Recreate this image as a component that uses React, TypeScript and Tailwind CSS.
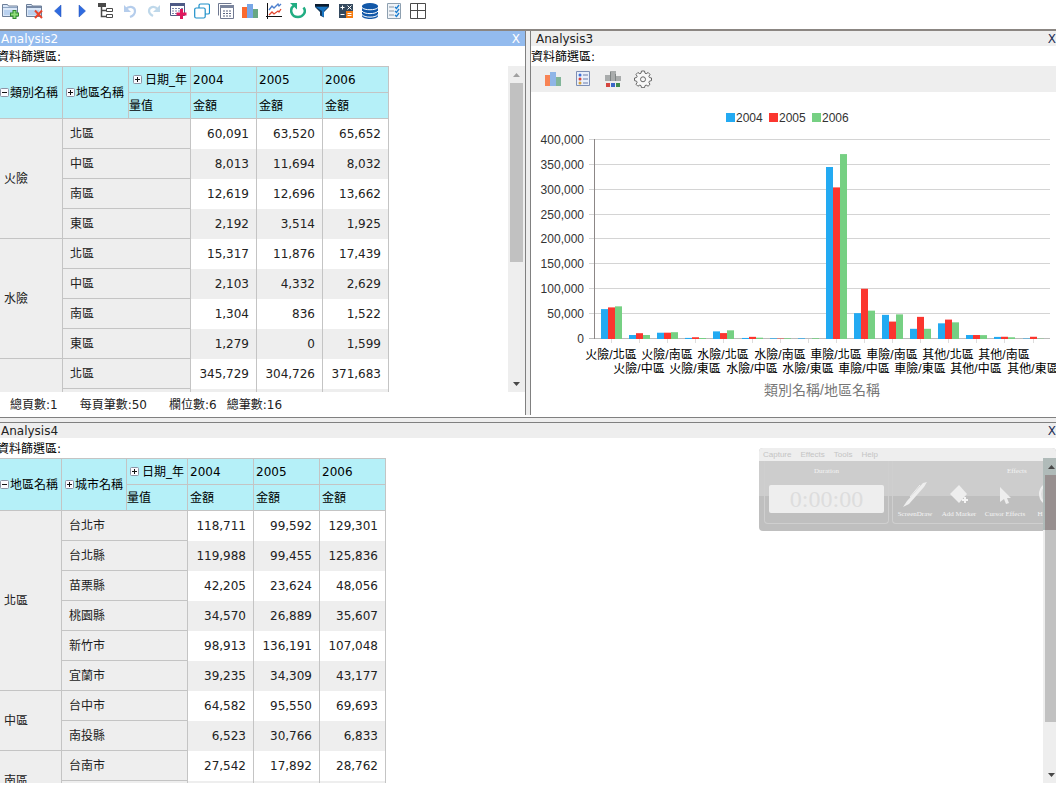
import React from 'react';

type Row = { name: string; values: string[] };
type Group = { name: string; rows: Row[] };

const YEARS = ['2004', '2005', '2006'];

const insuranceGroups: Group[] = [
  {
    name: '火險',
    rows: [
      { name: '北區', values: ['60,091', '63,520', '65,652'] },
      { name: '中區', values: ['8,013', '11,694', '8,032'] },
      { name: '南區', values: ['12,619', '12,696', '13,662'] },
      { name: '東區', values: ['2,192', '3,514', '1,925'] },
    ],
  },
  {
    name: '水險',
    rows: [
      { name: '北區', values: ['15,317', '11,876', '17,439'] },
      { name: '中區', values: ['2,103', '4,332', '2,629'] },
      { name: '南區', values: ['1,304', '836', '1,522'] },
      { name: '東區', values: ['1,279', '0', '1,599'] },
    ],
  },
  {
    name: '',
    rows: [
      { name: '北區', values: ['345,729', '304,726', '371,683'] },
      { name: '', values: ['', '', ''] },
    ],
  },
];

const cityGroups: Group[] = [
  {
    name: '北區',
    rows: [
      { name: '台北市', values: ['118,711', '99,592', '129,301'] },
      { name: '台北縣', values: ['119,988', '99,455', '125,836'] },
      { name: '苗栗縣', values: ['42,205', '23,624', '48,056'] },
      { name: '桃園縣', values: ['34,570', '26,889', '35,607'] },
      { name: '新竹市', values: ['98,913', '136,191', '107,048'] },
      { name: '宜蘭市', values: ['39,235', '34,309', '43,177'] },
    ],
  },
  {
    name: '中區',
    rows: [
      { name: '台中市', values: ['64,582', '95,550', '69,693'] },
      { name: '南投縣', values: ['6,523', '30,766', '6,833'] },
    ],
  },
  {
    name: '南區',
    rows: [
      { name: '台南市', values: ['27,542', '17,892', '28,762'] },
      { name: '', values: ['', '', ''] },
    ],
  },
];

const series = [
  { name: '2004', color: '#23aaf2' },
  { name: '2005', color: '#fb362f' },
  { name: '2006', color: '#76d083' },
];

const chartData: { label: string; values: number[] }[] = [
  { label: '火險/北區', values: [60091, 63520, 65652] },
  { label: '火險/中區', values: [8013, 11694, 8032] },
  { label: '火險/南區', values: [12619, 12696, 13662] },
  { label: '火險/東區', values: [2192, 3514, 1925] },
  { label: '水險/北區', values: [15317, 11876, 17439] },
  { label: '水險/中區', values: [2103, 4332, 2629] },
  { label: '水險/南區', values: [1304, 836, 1522] },
  { label: '水險/東區', values: [1279, 0, 1599] },
  { label: '車險/北區', values: [345729, 304726, 371683] },
  { label: '車險/中區', values: [52000, 101000, 57000] },
  { label: '車險/南區', values: [48500, 35000, 49500] },
  { label: '車險/東區', values: [20500, 44500, 20500] },
  { label: '其他/北區', values: [31500, 39000, 33500] },
  { label: '其他/中區', values: [8000, 8000, 7800] },
  { label: '其他/南區', values: [4200, 4500, 3500] },
  { label: '其他/東區', values: [900, 4500, 600] },
];

const BarsIcon = () => (
  <svg width="16" height="16" viewBox="0 0 16 16">
    <path d="M0 4h5v11H0z" fill="#fb6a2f" />
    <path d="M5 1h6v14H5z" fill="#78a7e6" />
    <path d="M11 6h5v9h-5z" fill="#68a884" />
  </svg>
);

const tools: { title: string; icon: React.ReactNode }[] = [
  {
    title: '新增',
    icon: (
      <svg width="18" height="16" viewBox="0 0 18 16">
        <path d="M1.5 13.500v-12h5l1 1.500h9v10.500z" fill="#dbe8f8" stroke="#6d7f99" />
        <path d="M2 4.500h14" stroke="#8fa6c4" />
        <path d="M3 7h11v5H3z" fill="#b9d1ef" />
        <path d="M13.500 7v9M9 11.500h9" stroke="#2e8a2e" strokeWidth="4" />
        <path d="M13.500 8v7M10 11.500h7" stroke="#8fdd7b" strokeWidth="2" />
      </svg>
    ),
  },
  {
    title: '刪除',
    icon: (
      <svg width="18" height="16" viewBox="0 0 18 16">
        <path d="M1.5 13.500v-12h5l1 1.500h9v10.500z" fill="#dbe8f8" stroke="#6d7f99" />
        <path d="M2 3h14v2H2z" fill="#7688a4" />
        <path d="M3 7h11v5H3z" fill="#b9d1ef" />
        <path d="M10 7.500l7 7.500M17 7.500L10 15" stroke="#e8452c" strokeWidth="2" />
      </svg>
    ),
  },
  {
    title: '上一頁',
    icon: (
      <svg width="16" height="16" viewBox="0 0 16 16">
        <path d="M11 2v12L4.500 8z" fill="#2f6be0" stroke="#1c4fb4" strokeWidth=".5" />
      </svg>
    ),
  },
  {
    title: '下一頁',
    icon: (
      <svg width="16" height="16" viewBox="0 0 16 16">
        <path d="M5 2v12l6.500-6z" fill="#2f6be0" stroke="#1c4fb4" strokeWidth=".5" />
      </svg>
    ),
  },
  {
    title: '樹狀',
    icon: (
      <svg width="16" height="16" viewBox="0 0 16 16">
        <path d="M0 0h8v4H0z" fill="#4a4a4a" />
        <path d="M3.500 4v9.500H9M3.500 7.500H9" fill="none" stroke="#4a4a4a" strokeWidth="1.500" />
        <path d="M8.500 5.500h6v3h-6zM8.500 11.500h6v3h-6z" fill="#fff" stroke="#4a4a4a" />
      </svg>
    ),
  },
  {
    title: '復原',
    icon: (
      <svg width="16" height="16" viewBox="0 0 16 16">
        <path d="M3 6.500C8 2 13 4 13 8c0 3-2 5-5 6" fill="none" stroke="#b5cdec" strokeWidth="2.200" />
        <path d="M2 2v7h7z" fill="#b5cdec" />
      </svg>
    ),
  },
  {
    title: '重做',
    icon: (
      <svg width="16" height="16" viewBox="0 0 16 16">
        <path d="M12 6.500C8 2 3 4 3 8c0 3 2 4 4 5" fill="none" stroke="#bfd8ea" strokeWidth="2.200" />
        <path d="M14 2v7H7z" fill="#bfd8ea" />
      </svg>
    ),
  },
  {
    title: '加入表格',
    icon: (
      <svg width="18" height="18" viewBox="0 0 18 18">
        <path d="M1.500 1.500h14v12h-14z" fill="#fff" stroke="#4e5a85" />
        <path d="M1 1h15v3H1z" fill="#4e5a85" />
        <path d="M3 6.500h11M3 9h11M3 11.500h7" stroke="#7a84aa" strokeDasharray="2 1" />
        <path d="M12.500 7v10M7.500 12h10" stroke="#e0185c" strokeWidth="3" />
      </svg>
    ),
  },
  {
    title: '複製',
    icon: (
      <svg width="16" height="16" viewBox="0 0 16 16">
        <rect x="5" y="1" width="10.500" height="10" rx="1.500" fill="#fff" stroke="#1c8fc9" strokeWidth="1.200" />
        <rect x=".7" y="5" width="10.500" height="10" rx="1.500" fill="#fff" stroke="#1c8fc9" strokeWidth="1.200" />
      </svg>
    ),
  },
  {
    title: '複製表格',
    icon: (
      <svg width="18" height="16" viewBox="0 0 18 16">
        <path d="M1.500 12.500v-12h13" fill="none" stroke="#6f7890" />
        <path d="M3.500 2.500h13v13h-13z" fill="#fff" stroke="#6f7890" />
        <path d="M3 2h14v3H3z" fill="#7b859d" />
        <path d="M6 8h9M6 10.500h9M6 13h9" stroke="#5a6480" strokeDasharray="2 1" />
      </svg>
    ),
  },
  { title: '圖表', icon: <BarsIcon /> },
  {
    title: '折線圖',
    icon: (
      <svg width="16" height="16" viewBox="0 0 16 16">
        <path d="M1.500 0v16M0 13.500h16" stroke="#111" />
        <path d="M3 7l3-4 2 2 4-4 1 2 2-2" fill="none" stroke="#4c7fce" strokeWidth="1.300" />
        <path d="M3 12l3-3 2 2 4-3 1 1 2-3" fill="none" stroke="#e3472f" strokeWidth="1.300" />
      </svg>
    ),
  },
  {
    title: '重新整理',
    icon: (
      <svg width="16" height="16" viewBox="0 0 16 16">
        <path d="M13.500 4.500C17 9 13 14 8 14 1 14-1 6 4 2.500" fill="none" stroke="#21ad82" strokeWidth="2.500" />
        <path d="M0 0h7v6.500z" fill="#21ad82" />
      </svg>
    ),
  },
  {
    title: '篩選',
    icon: (
      <svg width="16" height="16" viewBox="0 0 16 16">
        <path d="M1 1h14v3L10 9v5.500l-4-2V9L1 4z" fill="#12395e" />
        <path d="M1 1h14v2H1z" fill="#0a1c30" />
        <path d="M2 4h12l-4 4v6l-2-1V8z" fill="#1976c4" />
      </svg>
    ),
  },
  {
    title: '計算',
    icon: (
      <svg width="16" height="16" viewBox="0 0 16 16">
        <path d="M1 1h14v14H1z" fill="#34495e" />
        <path d="M8 8h7v7H8z" fill="#f57c10" />
        <path d="M2.500 4.500h4M4.500 2.500v4M9.500 2.500l4 4M13.500 2.500l-4 4M2.500 11.500h4M9.500 10.500h4M9.500 12.500h4" stroke="#fff" />
      </svg>
    ),
  },
  {
    title: '資料庫',
    icon: (
      <svg width="16" height="16" viewBox="0 0 16 16">
        <path d="M0 3v10c0 4 16 4 16 0V3z" fill="#1258a8" />
        <ellipse cx="8" cy="3" rx="8" ry="3" fill="#1258a8" />
        <path d="M0 4.500c2 3 14 3 16 0M0 8c2 3.500 14 3.500 16 0M0 11.500c2 3.500 14 3.500 16 0" fill="none" stroke="#fff" />
      </svg>
    ),
  },
  {
    title: '清單',
    icon: (
      <svg width="16" height="16" viewBox="0 0 16 16">
        <path d="M1.500.5h13v15h-13z" fill="#f0f4f8" stroke="#8ea0b0" />
        <path d="M3 4h5M3 8h5M3 12h5" stroke="#8796a6" />
        <path d="M9 4l1.500 1.500L13 2M9 8l1.500 1.500L13 6M9 12l1.500 1.500L13 10" fill="none" stroke="#1f7fd0" strokeWidth="1.400" />
      </svg>
    ),
  },
  {
    title: '版面',
    icon: (
      <svg width="16" height="16" viewBox="0 0 16 16">
        <path d="M.5.5h15v15H.5zM7.500 1v14M1 7.500h14" fill="none" stroke="#4a4a4a" />
      </svg>
    ),
  },
];

const chartTools: { title: string; icon: React.ReactNode }[] = [
  {
    title: '圖表類型',
    icon: (
      <span className="opacity-80">
        <BarsIcon />
      </span>
    ),
  },
  {
    title: '圖例',
    icon: (
      <svg width="16" height="16" viewBox="0 0 16 16">
        <path d="M1.500.5h13v14h-13z" fill="#e9effa" stroke="#7d8fb5" />
        <path d="M8 4h5M8 8h5M8 12h5" stroke="#6b7dab" />
        <circle cx="5" cy="4" r="1.500" fill="#3f6fd8" />
        <circle cx="5" cy="8" r="1.500" fill="#d8403a" />
        <circle cx="5" cy="12" r="1.500" fill="#d8a23a" />
      </svg>
    ),
  },
  {
    title: '圖表標籤',
    icon: (
      <svg width="16" height="18" viewBox="0 0 16 18">
        <path d="M0 5h5v6H0zM5 1h6v10H5zM11 6h5v5h-5z" fill="#a9acac" />
        <path d="M5.500 2v9M10.500 4v7" stroke="#7f8484" />
        <path d="M1 13h4v4H1z" fill="#d5453f" />
        <path d="M6 13h4v4H6z" fill="#3b66c7" />
        <path d="M11 13h4v4h-4z" fill="#3f8a4d" />
      </svg>
    ),
  },
  {
    title: '設定',
    icon: (
      <svg width="18" height="18" viewBox="0 0 18 18" fill="#f7f7f7" stroke="#666">
        <path d="M7.500 1h3l.5 2.200 1.200.5 2-1.200 1.800 1.900-1.100 1.900.5 1.200 2.100.5v2.600l-2.100.6-.5 1.200 1.100 1.900-1.900 1.900-1.900-1.100-1.200.5-.5 2.100H7.500L7 15.600l-1.200-.5-1.900 1.100L2 14.300l1.100-1.900-.5-1.200-2.100-.6V8l2.100-.5.500-1.200L2 4.400l1.900-1.900 1.900 1.200L7 3.200z" />
        <circle cx="9" cy="9.300" r="2.500" />
      </svg>
    ),
  },
];

const Toggle = ({ open }: { open?: boolean }) => (
  <button aria-label={open ? '收合' : '展開'} className="shrink-0">
    <svg width="9" height="9" viewBox="0 0 9 9" className="block">
      <rect x=".5" y=".5" width="8" height="8" rx="1" fill="#fbfbff" stroke="#8d93a5" />
      <path d={open ? 'M2 4.500h5' : 'M2 4.500h5M4.500 2v5'} stroke="#111" />
    </svg>
  </button>
);

const TitleBar = ({ title, active, inset }: { title: string; active?: boolean; inset?: boolean }) => (
  <div
    className={`flex h-[15px] shrink-0 items-start justify-between leading-[17px] ${
      active ? 'bg-[#93bbee] text-white' : 'bg-[#eee] text-[#222]'
    } ${inset ? 'pl-[5px]' : 'pl-px'}`}
  >
    <span>{title}</span>
    <button aria-label="關閉" className={active ? 'pr-[5px]' : 'text-[#1c2f55]'}>
      X
    </button>
  </div>
);

const PivotTable = ({
  groups,
  outer,
  inner,
  cols,
}: {
  groups: Group[];
  outer: string;
  inner: string;
  cols: string[];
}) => {
  let n = 0;
  return (
    <table className="table-fixed border-separate border-spacing-0 self-start border-t border-[#c4c4c4] text-left">
      <colgroup>
        {cols.map((c, i) => (
          <col key={i} className={c} />
        ))}
      </colgroup>
      <thead className="bg-[#b5f0f8] text-black [&_th]:border-b [&_th]:border-r [&_th]:border-[#c4c4c4] [&_th]:font-normal">
        <tr className="h-[26px]">
          <th rowSpan={2}>
            <div className="flex items-center gap-px whitespace-nowrap">
              <Toggle open />
              {outer}
            </div>
          </th>
          <th rowSpan={2}>
            <div className="flex items-center gap-px whitespace-nowrap pl-[3px]">
              <Toggle />
              {inner}
            </div>
          </th>
          <th>
            <div className="flex items-center justify-end gap-[3px] whitespace-nowrap pr-[3px]">
              <Toggle />
              日期_年
            </div>
          </th>
          {YEARS.map((y) => (
            <th key={y} className="pl-[2px]">{y}</th>
          ))}
        </tr>
        <tr className="h-[26px]">
          <th>量值</th>
          {YEARS.map((y) => (
            <th key={y} className="pl-[2px]">金額</th>
          ))}
        </tr>
      </thead>
      <tbody>
        {groups.map((g) =>
          g.rows.map((r, i) => {
            const odd = n++ % 2 === 1;
            return (
              <tr key={g.name + r.name} className="h-[30px]">
                {i === 0 && (
                  <th rowSpan={g.rows.length} className="border-b border-r border-[#c4c4c4] bg-[#eee] pl-1 font-normal">
                    {g.name}
                  </th>
                )}
                <th colSpan={2} className="border-b border-r border-[#c4c4c4] bg-[#eee] pl-[7px] font-normal">
                  {r.name}
                </th>
                {r.values.map((v, j) => (
                  <td key={j} className={`border-r border-[#c4c4c4] pr-[7px] text-right ${odd ? 'bg-[#eee]' : 'bg-white'}`}>
                    {v}
                  </td>
                ))}
              </tr>
            );
          })
        )}
      </tbody>
    </table>
  );
};

const Arrow = ({ up, muted }: { up?: boolean; muted?: boolean }) => (
  <svg width="17" height="17" viewBox="0 0 17 17" className="shrink-0">
    <path d={up ? 'M5 11h7L8.500 7z' : 'M5 7h7l-3.500 4z'} fill={muted ? '#a0a0a0' : '#484848'} />
  </svg>
);

// plot area inside the chart svg
const LEFT = 63;
const RIGHT = 519;
const BASE = 247;
const STEP = 25;
const MAX = 400000;

const BarChart = () => (
  <svg width="526" height="320" className="block shrink-0 font-['Liberation_Sans','Noto_Sans_CJK_TC',sans-serif] text-[12px]">
    {series.map((s, i) => (
      <g key={s.name}>
        <rect x={195 + i * 43} y="21" width="9" height="9" fill={s.color} />
        <text x={205 + i * 43} y="30" fill="#333">{s.name}</text>
      </g>
    ))}
    {Array.from({ length: 9 }, (_, i) => {
      const y = Math.round(BASE - i * 24.9) - 0.5;
      return (
        <g key={i}>
          <line x1={LEFT - 5} x2={RIGHT} y1={y} y2={y} stroke={i === 0 ? '#bbb' : '#d4d4d4'} />
          <text x="53" y={y + 4} textAnchor="end" fill="#333">
            {(i * 50000).toLocaleString('en-US')}
          </text>
        </g>
      );
    })}
    <line x1={LEFT + 0.5} x2={LEFT + 0.5} y1="47" y2={BASE} stroke="#8c8787" />
    {chartData.map((d, i) => {
      const cx = 81 + Math.round(i * 28.1);
      return (
        <g key={d.label}>
          <line x1={cx - 0.5} x2={cx - 0.5} y1={BASE} y2={BASE + 4} stroke="#ddd" />
          {d.values.map((v, j) => {
            const h = (v / MAX) * 199;
            return <rect key={j} x={cx - 11 + j * 7} y={BASE - h} width="7" height={h} fill={series[j].color} />;
          })}
          <text x={cx - 1} y={i % 2 ? BASE + STEP + 9 : BASE + STEP - 5} textAnchor="middle" fill="#000">
            {d.label}
          </text>
        </g>
      );
    })}
    <text x="291" y="303" textAnchor="middle" fill="#777" className="text-[14px]">
      類別名稱/地區名稱
    </text>
  </svg>
);

const Recorder = () => (
  <div className="absolute right-0 top-[25px] h-[83px] w-[297px] overflow-hidden rounded-sm bg-[#bfbfbf] text-[#f4f4f4]">
    <div className="flex h-[13px] items-center gap-[9px] bg-[#eee] pl-1 font-['Liberation_Sans',sans-serif] text-[8px] leading-[13px] text-[#c4c4c4]">
      <span>Capture</span>
      <span>Effects</span>
      <span>Tools</span>
      <span>Help</span>
    </div>
    <div className="flex h-[63px] bg-gradient-to-b from-[#cdcdcd] from-55% to-[#bfbfbf] to-55% font-['Liberation_Serif',serif] text-[7px] leading-[8px]">
      <div className="ml-[5px] flex w-[125px] shrink-0 flex-col items-center rounded-b border-x border-b border-[#cfcfcf] pt-[6px]">
        <span>Duration</span>
        <div className="mt-[10px] flex h-7 w-[115px] items-center justify-center rounded-xs bg-[#eee] text-[24px] text-[#ddd]">
          0:00:00
        </div>
      </div>
      <div className="ml-[3px] min-w-0 flex-1 rounded-bl border-b border-l border-[#cfcfcf] pt-[6px]">
        <div className="pl-[114px]">Effects</div>
        <div className="mt-[6px] flex gap-2 whitespace-nowrap pl-[4px]">
          <div className="flex w-9 shrink-0 flex-col items-center gap-[2px]">
            <svg width="26" height="27" viewBox="0 0 26 27">
              <path d="M25 1l-4 1L5 20l-4 6 6-3L22 6z" fill="#eee" />
              <path d="M8 16L18 4" stroke="#eee" />
            </svg>
            ScreenDraw
          </div>
          <div className="flex w-9 shrink-0 flex-col items-center gap-[2px]">
            <svg width="20" height="27" viewBox="0 0 20 27">
              <path d="M10 4l8 9-8 9-9-9z" fill="#eee" />
              <path d="M16 16v6M13 19h6" stroke="#f4f4f4" strokeWidth="2" />
            </svg>
            Add Marker
          </div>
          <div className="flex w-10 shrink-0 flex-col items-center gap-[2px]">
            <svg width="14" height="27" viewBox="0 0 14 27">
              <path d="M2 6v15l4-3 2 5 3-1-2-5h4z" fill="#eee" />
            </svg>
            Cursor Effects
          </div>
          <div className="flex w-9 shrink-0 flex-col items-center gap-[2px]">
            <svg width="27" height="27" viewBox="0 0 27 27">
              <circle cx="13" cy="13" r="11" fill="#ddd" stroke="#eee" strokeWidth="2" />
            </svg>
            Highlight
          </div>
        </div>
      </div>
    </div>
  </div>
);

const App = () => {
  return (
    <div className="flex h-screen flex-col overflow-hidden bg-white pb-[5px] font-['DejaVu_Sans','Noto_Sans_CJK_TC',sans-serif] text-[12px] leading-[16px] text-[#222]">
      {/* Toolbar */}
      <div className="-ml-[2px] flex h-[29px] shrink-0 pt-[2px]">
        {tools.map((t) => (
          <button key={t.title} title={t.title} className="flex h-[18px] w-6 items-center justify-center">
            {t.icon}
          </button>
        ))}
      </div>

      {/* Upper panels */}
      <div className="flex shrink-0 border-t-2 border-[#8b8682]">
        <section className="flex min-w-0 flex-1 flex-col border-r border-[#808080]">
          <TitleBar title="Analysis2" active />
          <div className="h-5 overflow-hidden leading-[22px] text-black">
            <span className="-ml-[3px]">資料篩選區:</span>
          </div>
          <div className="flex h-[326px] justify-between overflow-hidden">
            <PivotTable
              groups={insuranceGroups}
              outer="類別名稱"
              inner="地區名稱"
              cols={['w-[63px]', 'w-[66px]', 'w-[62px]', 'w-[66px]', 'w-[66px]', 'w-[66px]']}
            />
            <div className="flex w-[17px] flex-col bg-[#eee]">
              <Arrow up muted />
              <div className="mx-[2px] h-[179px] bg-[#c1c1c1]" />
              <div className="flex-1" />
              <Arrow />
            </div>
          </div>
          <div className="flex h-[23px] items-center pl-[10px] pt-[2px]">
            <span className="mr-[22px]">總頁數:1</span>
            <span className="mr-[22px]">每頁筆數:50</span>
            <span className="mr-[10px]">欄位數:6</span>
            <span>總筆數:16</span>
          </div>
        </section>
        <div className="w-1 bg-[#eee]" />
        <section className="flex min-w-0 flex-1 flex-col overflow-hidden border-l border-[#808080]">
          <TitleBar title="Analysis3" inset />
          <div className="h-5 leading-[22px] text-black">資料篩選區:</div>
          <div className="flex h-[26px] shrink-0 items-center bg-[#eee] pl-[7px]">
            {chartTools.map((t) => (
              <button key={t.title} title={t.title} className="flex h-5 w-[30px] items-center justify-center">
                {t.icon}
              </button>
            ))}
          </div>
          <BarChart />
        </section>
      </div>

      {/* Horizontal splitter */}
      <div className="mt-[2px] h-[6px] shrink-0 border-y border-[#808080] bg-[#eee]" />

      {/* Lower panel */}
      <section className="relative flex min-h-0 flex-1 flex-col">
        <TitleBar title="Analysis4" />
        <div className="h-5 shrink-0 overflow-hidden leading-[22px] text-black">
          <span className="-ml-[3px]">資料篩選區:</span>
        </div>
        <div className="flex min-h-0 flex-1 justify-between overflow-hidden">
          <PivotTable
            groups={cityGroups}
            outer="地區名稱"
            inner="城市名稱"
            cols={['w-[62px]', 'w-[65px]', 'w-[61px]', 'w-[66px]', 'w-[66px]', 'w-[66px]']}
          />
          <div className="z-10 flex w-[13px] flex-col bg-[#eee] bg-gradient-to-b from-[#a9b5b3]/90 from-[72px] to-transparent to-[72px]">
            <Arrow up />
            <div className="ml-[2px] h-[247px] bg-[#c1c1c1] bg-gradient-to-b from-[#989090] from-[55px] to-transparent to-[55px]" />
            <div className="flex-1" />
            <Arrow />
          </div>
        </div>
        <Recorder />
      </section>
    </div>
  );
};

export default App;
